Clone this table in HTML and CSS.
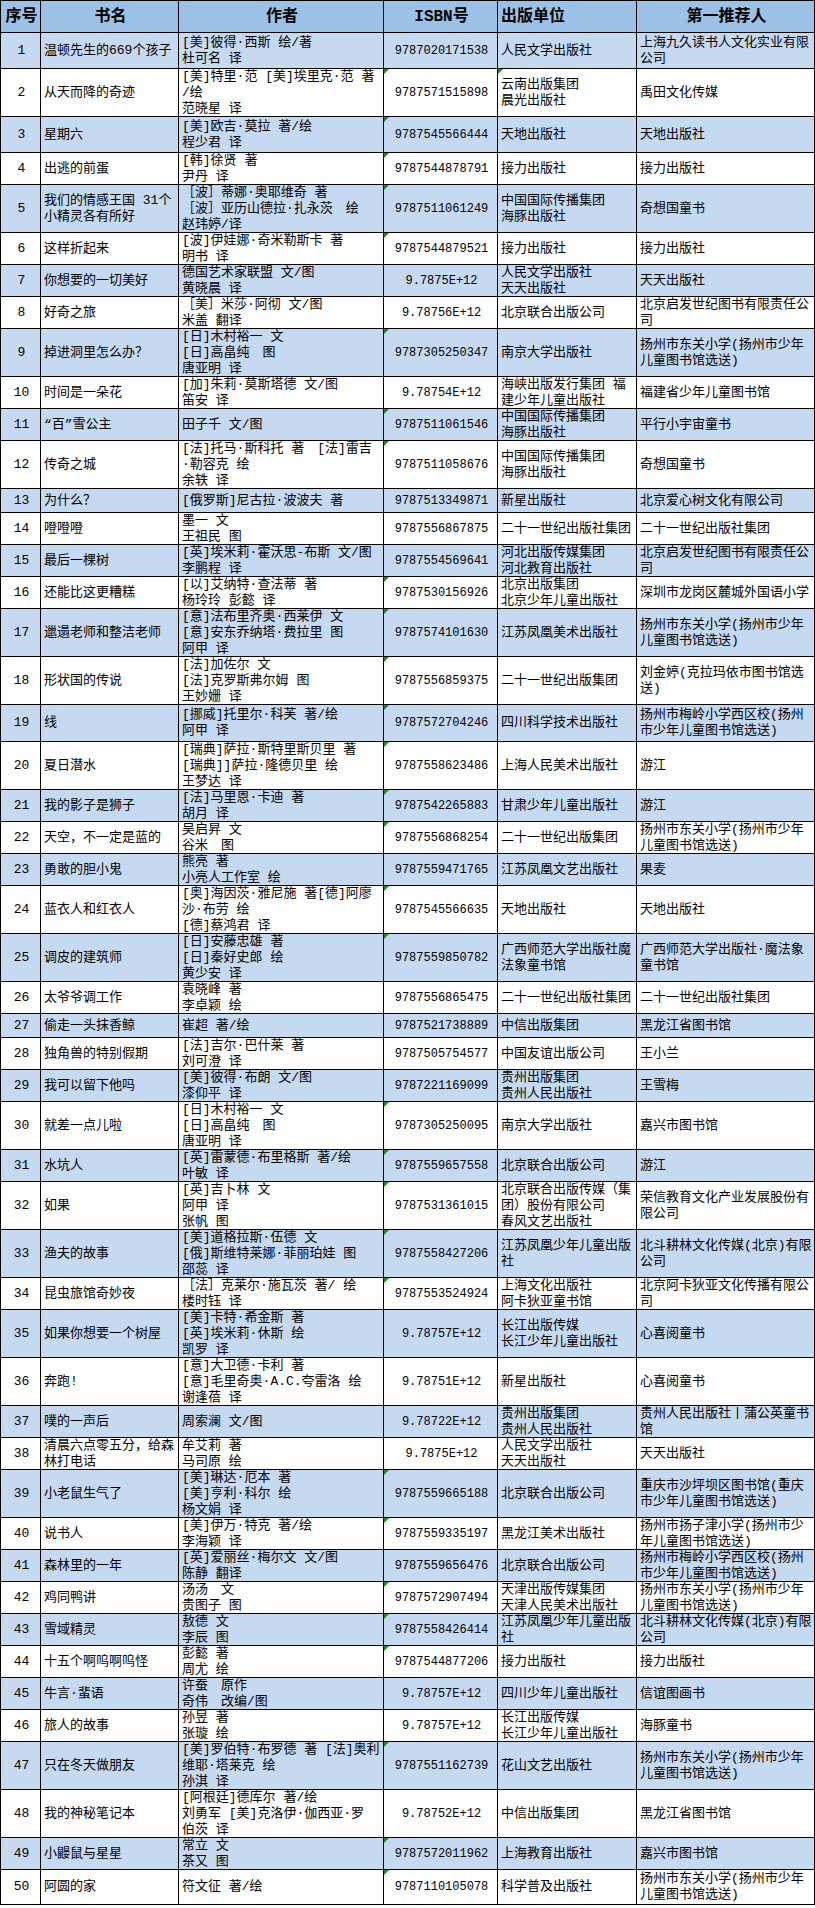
FILE: index.html
```html
<!DOCTYPE html>
<html lang="zh-CN">
<head>
<meta charset="utf-8">
<title>推荐书目</title>
<link rel="stylesheet" href="styles.css">
</head>
<body>
<div class="sheet">
  <div class="row head"><div class="c n"><span>序号</span></div><div class="c t"><span>书名</span></div><div class="c a"><span>作者</span></div><div class="c i"><span>ISBN号</span></div><div class="c p"><span>出版单位</span></div><div class="c r"><span>第一推荐人</span></div></div>

  <div class="row odd h36"><div class="c n"><span>1</span></div><div class="c t"><span>温顿先生的669个孩子</span></div><div class="c a"><span>[美]彼得·西斯 绘/著<br>杜可名 译</span></div><div class="c i"><span>9787020171538</span></div><div class="c p"><span>人民文学出版社</span></div><div class="c r"><span>上海九久读书人文化实业有限<br>公司</span></div></div>

  <div class="row h48"><div class="c n"><span>2</span></div><div class="c t"><span>从天而降的奇迹</span></div><div class="c a"><span>[美]特里·范 [美]埃里克·范 著<br>/绘<br>范晓星 译</span></div><div class="c i g"><span>9787571515898</span></div><div class="c p g"><span>云南出版集团<br>晨光出版社</span></div><div class="c r"><span>禹田文化传媒</span></div></div>

  <div class="row odd h36"><div class="c n"><span>3</span></div><div class="c t"><span>星期六</span></div><div class="c a"><span>[美]欧吉·莫拉 著/绘<br>程少君 译</span></div><div class="c i g"><span>9787545566444</span></div><div class="c p"><span>天地出版社</span></div><div class="c r"><span>天地出版社</span></div></div>

  <div class="row"><div class="c n"><span>4</span></div><div class="c t"><span>出逃的前蛋</span></div><div class="c a"><span>[韩]徐贤 著<br>尹丹 译</span></div><div class="c i g"><span>9787544878791</span></div><div class="c p"><span>接力出版社</span></div><div class="c r"><span>接力出版社</span></div></div>

  <div class="row odd h48"><div class="c n"><span>5</span></div><div class="c t"><span>我们的情感王国 31个<br>小精灵各有所好</span></div><div class="c a"><span>［波］蒂娜·奥耶维奇 著<br>［波］亚历山德拉·扎永茨　绘<br>赵玮婷/译</span></div><div class="c i g"><span>9787511061249</span></div><div class="c p"><span>中国国际传播集团<br>海豚出版社</span></div><div class="c r"><span>奇想国童书</span></div></div>

  <div class="row"><div class="c n"><span>6</span></div><div class="c t"><span>这样折起来</span></div><div class="c a"><span>[波]伊娃娜·奇米勒斯卡 著<br>明书 译</span></div><div class="c i g"><span>9787544879521</span></div><div class="c p"><span>接力出版社</span></div><div class="c r"><span>接力出版社</span></div></div>

  <div class="row odd"><div class="c n"><span>7</span></div><div class="c t"><span>你想要的一切美好</span></div><div class="c a"><span>德国艺术家联盟 文/图<br>黄晓晨 译</span></div><div class="c i"><span>9.7875E+12</span></div><div class="c p"><span>人民文学出版社<br>天天出版社</span></div><div class="c r"><span>天天出版社</span></div></div>

  <div class="row"><div class="c n"><span>8</span></div><div class="c t"><span>好奇之旅</span></div><div class="c a"><span>［美］米莎·阿彻 文/图<br>米盖 翻译</span></div><div class="c i"><span>9.78756E+12</span></div><div class="c p"><span>北京联合出版公司</span></div><div class="c r"><span>北京启发世纪图书有限责任公<br>司</span></div></div>

  <div class="row odd h48"><div class="c n"><span>9</span></div><div class="c t"><span>掉进洞里怎么办？</span></div><div class="c a"><span>[日]木村裕一 文<br>[日]高畠纯　图<br>唐亚明 译</span></div><div class="c i g"><span>9787305250347</span></div><div class="c p"><span>南京大学出版社</span></div><div class="c r"><span>扬州市东关小学(扬州市少年<br>儿童图书馆选送)</span></div></div>

  <div class="row"><div class="c n"><span>10</span></div><div class="c t"><span>时间是一朵花</span></div><div class="c a"><span>[加]朱莉·莫斯塔德 文/图<br>笛安 译</span></div><div class="c i"><span>9.78754E+12</span></div><div class="c p"><span>海峡出版发行集团 福<br>建少年儿童出版社</span></div><div class="c r"><span>福建省少年儿童图书馆</span></div></div>

  <div class="row odd"><div class="c n"><span>11</span></div><div class="c t"><span>“百”雪公主</span></div><div class="c a"><span>田子千 文/图</span></div><div class="c i g"><span>9787511061546</span></div><div class="c p"><span>中国国际传播集团<br>海豚出版社</span></div><div class="c r"><span>平行小宇宙童书</span></div></div>

  <div class="row h48"><div class="c n"><span>12</span></div><div class="c t"><span>传奇之城</span></div><div class="c a"><span>[法]托马·斯科托 著　[法]雷吉<br>·勒容克 绘<br>余轶 译</span></div><div class="c i g"><span>9787511058676</span></div><div class="c p"><span>中国国际传播集团<br>海豚出版社</span></div><div class="c r"><span>奇想国童书</span></div></div>

  <div class="row odd h24"><div class="c n"><span>13</span></div><div class="c t"><span>为什么？</span></div><div class="c a"><span>[俄罗斯]尼古拉·波波夫 著</span></div><div class="c i"><span>9787513349871</span></div><div class="c p"><span>新星出版社</span></div><div class="c r"><span>北京爱心树文化有限公司</span></div></div>

  <div class="row"><div class="c n"><span>14</span></div><div class="c t"><span>噔噔噔</span></div><div class="c a"><span>墨一 文<br>王祖民 图</span></div><div class="c i"><span>9787556867875</span></div><div class="c p"><span>二十一世纪出版社集团</span></div><div class="c r"><span>二十一世纪出版社集团</span></div></div>

  <div class="row odd"><div class="c n"><span>15</span></div><div class="c t"><span>最后一棵树</span></div><div class="c a"><span>[英]埃米莉·霍沃思-布斯 文/图<br>李鹏程 译</span></div><div class="c i"><span>9787554569641</span></div><div class="c p"><span>河北出版传媒集团<br>河北教育出版社</span></div><div class="c r"><span>北京启发世纪图书有限责任公<br>司</span></div></div>

  <div class="row"><div class="c n"><span>16</span></div><div class="c t"><span>还能比这更糟糕</span></div><div class="c a"><span>[以]艾纳特·查法蒂 著<br>杨玲玲 彭懿 译</span></div><div class="c i g"><span>9787530156926</span></div><div class="c p"><span>北京出版集团<br>北京少年儿童出版社</span></div><div class="c r"><span>深圳市龙岗区麓城外国语小学</span></div></div>

  <div class="row odd h48"><div class="c n"><span>17</span></div><div class="c t"><span>邋遢老师和整洁老师</span></div><div class="c a"><span>[意]法布里齐奥·西莱伊 文<br>[意]安东乔纳塔·费拉里 图<br>阿甲 译</span></div><div class="c i g"><span>9787574101630</span></div><div class="c p"><span>江苏凤凰美术出版社</span></div><div class="c r"><span>扬州市东关小学(扬州市少年<br>儿童图书馆选送)</span></div></div>

  <div class="row h48"><div class="c n"><span>18</span></div><div class="c t"><span>形状国的传说</span></div><div class="c a"><span>[法]加佐尔 文<br>[法]克罗斯弗尔姆 图<br>王妙姗 译</span></div><div class="c i g"><span>9787556859375</span></div><div class="c p"><span>二十一世纪出版集团</span></div><div class="c r"><span>刘金婷(克拉玛依市图书馆选<br>送)</span></div></div>

  <div class="row odd h37"><div class="c n"><span>19</span></div><div class="c t"><span>线</span></div><div class="c a"><span>[挪威]托里尔·科芙 著/绘<br>阿甲 译</span></div><div class="c i g"><span>9787572704246</span></div><div class="c p"><span>四川科学技术出版社</span></div><div class="c r"><span>扬州市梅岭小学西区校(扬州<br>市少年儿童图书馆选送)</span></div></div>

  <div class="row h48"><div class="c n"><span>20</span></div><div class="c t"><span>夏日潜水</span></div><div class="c a"><span>[瑞典]萨拉·斯特里斯贝里 著<br>[瑞典]]萨拉·隆德贝里 绘<br>王梦达 译</span></div><div class="c i g"><span>9787558623486</span></div><div class="c p"><span>上海人民美术出版社</span></div><div class="c r"><span>游江</span></div></div>

  <div class="row odd"><div class="c n"><span>21</span></div><div class="c t"><span>我的影子是狮子</span></div><div class="c a"><span>[法]马里恩·卡迪 著<br>胡月 译</span></div><div class="c i g"><span>9787542265883</span></div><div class="c p"><span>甘肃少年儿童出版社</span></div><div class="c r"><span>游江</span></div></div>

  <div class="row"><div class="c n"><span>22</span></div><div class="c t"><span>天空，不一定是蓝的</span></div><div class="c a"><span>吴启昇 文<br>谷米　图</span></div><div class="c i g"><span>9787556868254</span></div><div class="c p"><span>二十一世纪出版集团</span></div><div class="c r"><span>扬州市东关小学(扬州市少年<br>儿童图书馆选送)</span></div></div>

  <div class="row odd"><div class="c n"><span>23</span></div><div class="c t"><span>勇敢的胆小鬼</span></div><div class="c a"><span>熊亮 著<br>小亮人工作室 绘</span></div><div class="c i"><span>9787559471765</span></div><div class="c p"><span>江苏凤凰文艺出版社</span></div><div class="c r"><span>果麦</span></div></div>

  <div class="row h48"><div class="c n"><span>24</span></div><div class="c t"><span>蓝衣人和红衣人</span></div><div class="c a"><span>[奥]海因茨·雅尼施 著[德]阿廖<br>沙·布劳 绘<br>[德]蔡鸿君 译</span></div><div class="c i g"><span>9787545566635</span></div><div class="c p"><span>天地出版社</span></div><div class="c r"><span>天地出版社</span></div></div>

  <div class="row odd h48"><div class="c n"><span>25</span></div><div class="c t"><span>调皮的建筑师</span></div><div class="c a"><span>[日]安藤忠雄 著<br>[日]秦好史郎 绘<br>黄少安 译</span></div><div class="c i g"><span>9787559850782</span></div><div class="c p"><span>广西师范大学出版社魔<br>法象童书馆</span></div><div class="c r"><span>广西师范大学出版社·魔法象<br>童书馆</span></div></div>

  <div class="row"><div class="c n"><span>26</span></div><div class="c t"><span>太爷爷调工作</span></div><div class="c a"><span>袁晓峰 著<br>李卓颖 绘</span></div><div class="c i"><span>9787556865475</span></div><div class="c p"><span>二十一世纪出版社集团</span></div><div class="c r"><span>二十一世纪出版社集团</span></div></div>

  <div class="row odd h24"><div class="c n"><span>27</span></div><div class="c t"><span>偷走一头抹香鲸</span></div><div class="c a"><span>崔超 著/绘</span></div><div class="c i"><span>9787521738889</span></div><div class="c p"><span>中信出版集团</span></div><div class="c r"><span>黑龙江省图书馆</span></div></div>

  <div class="row"><div class="c n"><span>28</span></div><div class="c t"><span>独角兽的特别假期</span></div><div class="c a"><span>[法]吉尔·巴什莱 著<br>刘可澄 译</span></div><div class="c i"><span>9787505754577</span></div><div class="c p"><span>中国友谊出版公司</span></div><div class="c r"><span>王小兰</span></div></div>

  <div class="row odd"><div class="c n"><span>29</span></div><div class="c t"><span>我可以留下他吗</span></div><div class="c a"><span>[美]彼得·布朗 文/图<br>漆仰平 译</span></div><div class="c i"><span>9787221169099</span></div><div class="c p"><span>贵州出版集团<br>贵州人民出版社</span></div><div class="c r"><span>王雪梅</span></div></div>

  <div class="row h48"><div class="c n"><span>30</span></div><div class="c t"><span>就差一点儿啦</span></div><div class="c a"><span>[日]木村裕一 文<br>[日]高畠纯　图<br>唐亚明 译</span></div><div class="c i g"><span>9787305250095</span></div><div class="c p"><span>南京大学出版社</span></div><div class="c r"><span>嘉兴市图书馆</span></div></div>

  <div class="row odd"><div class="c n"><span>31</span></div><div class="c t"><span>水坑人</span></div><div class="c a"><span>[英]雷蒙德·布里格斯 著/绘<br>叶敏 译</span></div><div class="c i g"><span>9787559657558</span></div><div class="c p"><span>北京联合出版公司</span></div><div class="c r"><span>游江</span></div></div>

  <div class="row h48"><div class="c n"><span>32</span></div><div class="c t"><span>如果</span></div><div class="c a"><span>[英]吉卜林 文<br>阿甲 译<br>张帆 图</span></div><div class="c i g"><span>9787531361015</span></div><div class="c p"><span>北京联合出版传媒（集<br>团）股份有限公司<br>春风文艺出版社</span></div><div class="c r"><span>荣信教育文化产业发展股份有<br>限公司</span></div></div>

  <div class="row odd h48"><div class="c n"><span>33</span></div><div class="c t"><span>渔夫的故事</span></div><div class="c a"><span>[美]道格拉斯·伍德 文<br>[俄]斯维特莱娜·菲丽珀娃 图<br>邵蕊 译</span></div><div class="c i g"><span>9787558427206</span></div><div class="c p"><span>江苏凤凰少年儿童出版<br>社</span></div><div class="c r"><span>北斗耕林文化传媒(北京)有限<br>公司</span></div></div>

  <div class="row"><div class="c n"><span>34</span></div><div class="c t"><span>昆虫旅馆奇妙夜</span></div><div class="c a"><span>［法］克莱尔·施瓦茨 著/ 绘<br>楼时钰 译</span></div><div class="c i g"><span>9787553524924</span></div><div class="c p"><span>上海文化出版社<br>阿卡狄亚童书馆</span></div><div class="c r"><span>北京阿卡狄亚文化传播有限公<br>司</span></div></div>

  <div class="row odd h48"><div class="c n"><span>35</span></div><div class="c t"><span>如果你想要一个树屋</span></div><div class="c a"><span>[美]卡特·希金斯 著<br>[英]埃米莉·休斯 绘<br>凯罗 译</span></div><div class="c i"><span>9.78757E+12</span></div><div class="c p"><span>长江出版传媒<br>长江少年儿童出版社</span></div><div class="c r"><span>心喜阅童书</span></div></div>

  <div class="row h48"><div class="c n"><span>36</span></div><div class="c t"><span>奔跑!</span></div><div class="c a"><span>[意]大卫德·卡利 著<br>[意]毛里奇奥·A.C.夸雷洛 绘<br>谢逢蓓 译</span></div><div class="c i"><span>9.78751E+12</span></div><div class="c p"><span>新星出版社</span></div><div class="c r"><span>心喜阅童书</span></div></div>

  <div class="row odd"><div class="c n"><span>37</span></div><div class="c t"><span>噗的一声后</span></div><div class="c a"><span>周索澜 文/图</span></div><div class="c i"><span>9.78722E+12</span></div><div class="c p"><span>贵州出版集团<br>贵州人民出版社</span></div><div class="c r"><span>贵州人民出版社丨蒲公英童书<br>馆</span></div></div>

  <div class="row"><div class="c n"><span>38</span></div><div class="c t"><span>清晨六点零五分，给森<br>林打电话</span></div><div class="c a"><span>牟艾莉 著<br>马司原 绘</span></div><div class="c i"><span>9.7875E+12</span></div><div class="c p"><span>人民文学出版社<br>天天出版社</span></div><div class="c r"><span>天天出版社</span></div></div>

  <div class="row odd h48"><div class="c n"><span>39</span></div><div class="c t"><span>小老鼠生气了</span></div><div class="c a"><span>[美]琳达·厄本 著<br>[美]亨利·科尔 绘<br>杨文娟 译</span></div><div class="c i g"><span>9787559665188</span></div><div class="c p"><span>北京联合出版公司</span></div><div class="c r"><span>重庆市沙坪坝区图书馆(重庆<br>市少年儿童图书馆选送)</span></div></div>

  <div class="row"><div class="c n"><span>40</span></div><div class="c t"><span>说书人</span></div><div class="c a"><span>[美]伊万·特克 著/绘<br>李海颖 译</span></div><div class="c i g"><span>9787559335197</span></div><div class="c p"><span>黑龙江美术出版社</span></div><div class="c r"><span>扬州市扬子津小学(扬州市少<br>年儿童图书馆选送)</span></div></div>

  <div class="row odd"><div class="c n"><span>41</span></div><div class="c t"><span>森林里的一年</span></div><div class="c a"><span>[英]爱丽丝·梅尔文 文/图<br>陈静 翻译</span></div><div class="c i"><span>9787559656476</span></div><div class="c p"><span>北京联合出版公司</span></div><div class="c r"><span>扬州市梅岭小学西区校(扬州<br>市少年儿童图书馆选送)</span></div></div>

  <div class="row"><div class="c n"><span>42</span></div><div class="c t"><span>鸡同鸭讲</span></div><div class="c a"><span>汤汤　文<br>贵图子 图</span></div><div class="c i g"><span>9787572907494</span></div><div class="c p"><span>天津出版传媒集团<br>天津人民美术出版社</span></div><div class="c r"><span>扬州市东关小学(扬州市少年<br>儿童图书馆选送)</span></div></div>

  <div class="row odd"><div class="c n"><span>43</span></div><div class="c t"><span>雪域精灵</span></div><div class="c a"><span>敖德 文<br>李辰 图</span></div><div class="c i g"><span>9787558426414</span></div><div class="c p"><span>江苏凤凰少年儿童出版<br>社</span></div><div class="c r"><span>北斗耕林文化传媒(北京)有限<br>公司</span></div></div>

  <div class="row"><div class="c n"><span>44</span></div><div class="c t"><span>十五个啊呜啊呜怪</span></div><div class="c a"><span>彭懿 著<br>周尤 绘</span></div><div class="c i g"><span>9787544877206</span></div><div class="c p"><span>接力出版社</span></div><div class="c r"><span>接力出版社</span></div></div>

  <div class="row odd"><div class="c n"><span>45</span></div><div class="c t"><span>牛言·蜚语</span></div><div class="c a"><span>许蚕　原作<br>奇伟　改编/图</span></div><div class="c i"><span>9.78757E+12</span></div><div class="c p"><span>四川少年儿童出版社</span></div><div class="c r"><span>信谊图画书</span></div></div>

  <div class="row"><div class="c n"><span>46</span></div><div class="c t"><span>旅人的故事</span></div><div class="c a"><span>孙昱 著<br>张璇 绘</span></div><div class="c i"><span>9.78757E+12</span></div><div class="c p"><span>长江出版传媒<br>长江少年儿童出版社</span></div><div class="c r"><span>海豚童书</span></div></div>

  <div class="row odd h48"><div class="c n"><span>47</span></div><div class="c t"><span>只在冬天做朋友</span></div><div class="c a"><span>[美]罗伯特·布罗德 著 [法]奥利<br>维耶·塔莱克 绘<br>孙淇 译</span></div><div class="c i g"><span>9787551162739</span></div><div class="c p"><span>花山文艺出版社</span></div><div class="c r"><span>扬州市东关小学(扬州市少年<br>儿童图书馆选送)</span></div></div>

  <div class="row h48"><div class="c n"><span>48</span></div><div class="c t"><span>我的神秘笔记本</span></div><div class="c a"><span>[阿根廷]德库尔 著/绘<br>刘勇军 [美]克洛伊·伽西亚·罗<br>伯茨 译</span></div><div class="c i"><span>9.78752E+12</span></div><div class="c p"><span>中信出版集团</span></div><div class="c r"><span>黑龙江省图书馆</span></div></div>

  <div class="row odd"><div class="c n"><span>49</span></div><div class="c t"><span>小鼹鼠与星星</span></div><div class="c a"><span>常立 文<br>茶又 图</span></div><div class="c i g"><span>9787572011962</span></div><div class="c p"><span>上海教育出版社</span></div><div class="c r"><span>嘉兴市图书馆</span></div></div>

  <div class="row h35"><div class="c n"><span>50</span></div><div class="c t"><span>阿圆的家</span></div><div class="c a"><span>符文征 著/绘</span></div><div class="c i g"><span>9787110105078</span></div><div class="c p"><span>科学普及出版社</span></div><div class="c r"><span>扬州市东关小学(扬州市少年<br>儿童图书馆选送)</span></div></div>
</div>
</body>
</html>
```

FILE: styles.css
```css
* {
  box-sizing: border-box;
}

body {
  margin: 0;
  background: #ffffff;
  color: #000000;
  font-family: "Liberation Mono", "Noto Sans CJK SC", sans-serif;
  font-size: 13px;
  line-height: 16px;
}

.sheet {
  width: 815px;
  border-top: 1px solid #000000;
  border-left: 1px solid #000000;
}

.row {
  display: grid;
  grid-template-columns: 40px 138px 205px 114px 139px 178px;
  height: 32px;
  border-bottom: 1px solid #000000;
}

.c {
  position: relative;
  display: flex;
  align-items: center;
  min-width: 0;
  padding: 0 1px 0 3px;
  border-right: 1px solid #000000;
  white-space: nowrap;
}

.n,
.i {
  justify-content: center;
}

.i {
  font-size: 12px;
}

.head {
  background: #9bc2e6;
  font-size: 16px;
  line-height: 20px;
  font-weight: bold;
}

.head .c {
  justify-content: center;
}

.head .i {
  font-size: 16px;
}

.head .p {
  justify-content: flex-start;
}

.odd {
  background: #c5d9f1;
}

.h24 { height: 24px; }
.h35 { height: 35px; }
.h36 { height: 36px; }
.h37 { height: 37px; }
.h48 { height: 48px; }

.g::before {
  content: "";
  position: absolute;
  left: 0;
  top: 0;
  width: 0;
  height: 0;
  border-top: 5px solid #1f8a1f;
  border-right: 5px solid transparent;
}
```
